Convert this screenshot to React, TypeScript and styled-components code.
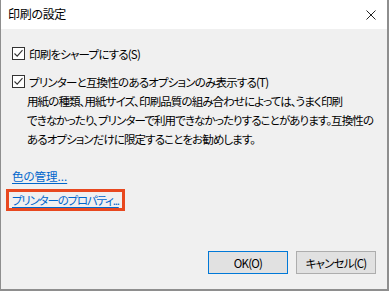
import React from 'react';
import styled, { createGlobalStyle } from 'styled-components';

const GlobalStyle = createGlobalStyle`
  html, body {
    margin: 0;
    padding: 0;
    background: #ffffff;
  }
  body {
    font-family: "Noto Sans CJK JP", "Noto Sans", sans-serif;
    font-size: 11.5px;
    letter-spacing: -1px;
    color: #000;
    font-feature-settings: "palt";
  }
`;

const Window = styled.div`
  box-sizing: border-box;
  width: 389px;
  height: 291px;
  border-left: 1px solid #8e8e8e;
  border-right: 2px solid #8e8e8e;
  border-bottom: 2px solid #8e8e8e;
  display: flex;
  flex-direction: column;
`;

const TitleBar = styled.div`
  height: 29px;
  flex: none;
  background: #ffffff;
  display: flex;
  align-items: center;
  justify-content: space-between;
  padding: 0 10px 0 7px;
`;

const Title = styled.span`
  font-size: 12px;
  letter-spacing: -0.3px;
  line-height: 16px;
  margin-top: -1px;
`;

const CloseIcon = styled.svg`
  width: 10px;
  height: 10px;
  margin-right: 1px;
`;

const Body = styled.div`
  flex: 1;
  background: #f0f0f0;
  display: flex;
  flex-direction: column;
  padding: 18px 11px 15px 11px;
`;

const CheckRow = styled.label<{ $gap?: number }>`
  display: flex;
  align-items: center;
  height: 13px;
  margin-top: ${(p) => p.$gap ?? 0}px;
  gap: 4px;
`;

const Box = styled.span`
  box-sizing: border-box;
  width: 13px;
  height: 13px;
  border: 1px solid #333333;
  background: #ffffff;
  display: flex;
  align-items: center;
  justify-content: center;
  flex: none;
`;

const CheckText = styled.span`
  line-height: 16px;
  white-space: nowrap;
  letter-spacing: -0.8px;
`;

const Description = styled.p`
  margin: 4px 0 0 15px;
  line-height: 19px;
  white-space: nowrap;
  letter-spacing: -0.9px;
`;

const Link = styled.a<{ $spacing?: number }>`
  color: #0066cc;
  text-decoration: underline;
  text-underline-offset: 2px;
  line-height: 19px;
  white-space: nowrap;
  cursor: pointer;
  letter-spacing: ${(p) => p.$spacing ?? -1}px;
`;

const LinkRow = styled.div`
  margin-top: 18px;
`;

const FocusBox = styled.div`
  align-self: flex-start;
  margin: 3px 0 0 -6px;
  border: 3px solid #e8481f;
  padding: 0 3px 0 3px;
  height: 16px;
  display: flex;
  align-items: center;
`;

const Footer = styled.div`
  margin-top: auto;
  display: flex;
  justify-content: flex-end;
  gap: 8px;
`;

const Button = styled.button<{ $primary?: boolean }>`
  box-sizing: border-box;
  width: 80px;
  height: 23px;
  font-family: inherit;
  font-size: 11.5px;
  letter-spacing: -0.8px;
  font-feature-settings: "palt";
  color: #000;
  background: #e1e1e1;
  border: 1px solid ${(p) => (p.$primary ? '#0078d7' : '#adadad')};
  padding: 0;
`;

const Check = () => (
  <Box>
    <svg width="11" height="11" viewBox="0 0 11 11">
      <path d="M1.5 5.5 L4.2 8.2 L9.5 2.2" fill="none" stroke="#333" strokeWidth="1.1" />
    </svg>
  </Box>
);

export default function App() {
  return (
    <>
      <GlobalStyle />
      <Window>
        <TitleBar>
          <Title>印刷の設定</Title>
          <CloseIcon viewBox="0 0 10 10">
            <path d="M0.5 0.5 L9.5 9.5 M9.5 0.5 L0.5 9.5" stroke="#222" strokeWidth="1" />
          </CloseIcon>
        </TitleBar>
        <Body>
          <CheckRow>
            <Check />
            <CheckText>印刷をシャープにする(S)</CheckText>
          </CheckRow>
          <CheckRow $gap={15}>
            <Check />
            <CheckText>プリンターと互換性のあるオプションのみ表示する(T)</CheckText>
          </CheckRow>
          <Description>
            用紙の種類、用紙サイズ、印刷品質の組み合わせによっては、うまく印刷
            <br />
            できなかったり、プリンターで利用できなかったりすることがあります。互換性の
            <br />
            あるオプションだけに限定することをお勧めします。
          </Description>
          <LinkRow>
            <Link $spacing={0}>色の管理...</Link>
          </LinkRow>
          <FocusBox>
            <Link $spacing={-1.2}>プリンターのプロパティ...</Link>
          </FocusBox>
          <Footer>
            <Button $primary>OK(O)</Button>
            <Button>キャンセル(C)</Button>
          </Footer>
        </Body>
      </Window>
    </>
  );
}
